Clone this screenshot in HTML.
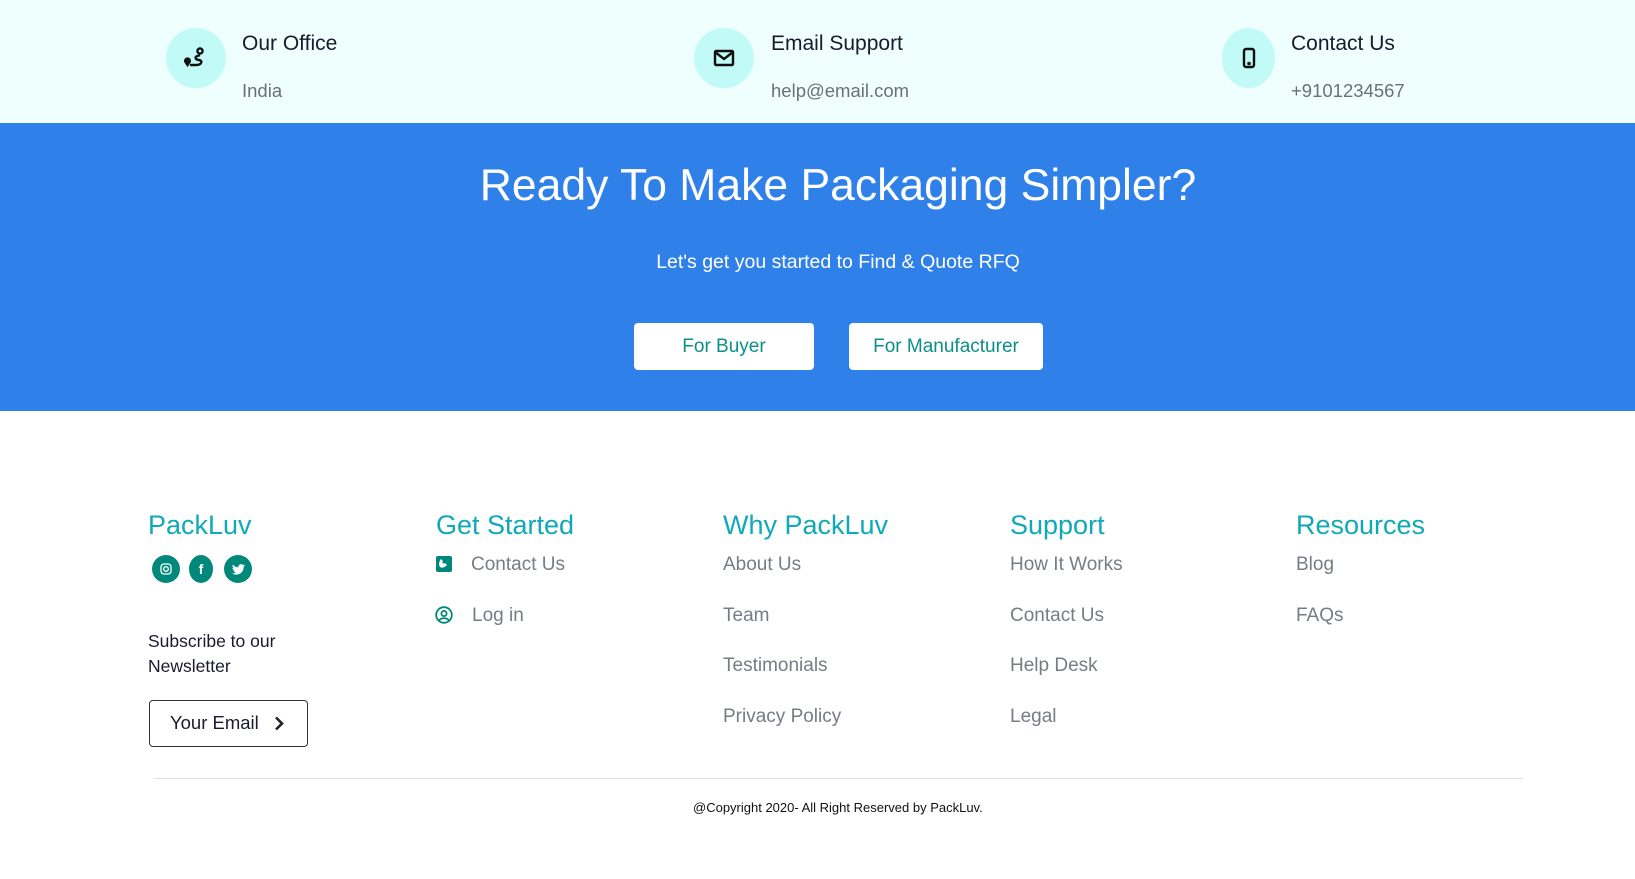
<!DOCTYPE html>
<html><head><meta charset="utf-8"><style>
*{margin:0;padding:0;box-sizing:border-box}
body{width:1635px;height:879px;background:#fff;font-family:"Liberation Sans",sans-serif;position:relative;overflow:hidden}
.abs{position:absolute}
.top{left:0;top:0;width:1635px;height:123px;background:#effffe}
.circ{width:60px;height:60px;border-radius:50%;background:#c2faf7;display:flex;align-items:center;justify-content:center;top:28px}
.t1{font-size:21px;color:#1a1a2e;top:32px}
.t2{font-size:18.5px;color:#6b6f7a;top:80px}
.blue{left:0;top:123px;width:1635px;height:288px;background:#2f80e8}
.btn{background:#fff;border-radius:4px;color:#0b8f8a;font-size:19px;display:flex;align-items:center;justify-content:center;top:323px;height:47px}
.h{font-size:27px;color:#10a9b8;top:510px}
.l{font-size:19px;color:#777c84}
.soc{width:28px;height:28px;border-radius:50%;background:#00897b;top:555px;display:flex;align-items:center;justify-content:center}
</style></head><body>
<div class="abs top"></div>
<div class="abs circ" style="left:166px"><svg width="26" height="24" viewBox="0 0 26 24" fill="none" stroke="#111" stroke-width="2.4" stroke-linecap="round"><path d="M4.5 19l-2-3a2.3 2.3 0 1 1 4 0z" fill="#111"/><circle cx="17" cy="5" r="2.6"/><path d="M16 9.5c-5 1-4 4 0 4.5s3 5-3 5H8"/></svg></div>
<div class="abs t1" style="left:242px">Our Office</div>
<div class="abs t2" style="left:242px">India</div>
<div class="abs circ" style="left:694px"><svg width="22" height="18" viewBox="0 0 22 18" fill="none" stroke="#111" stroke-width="2.4"><rect x="2" y="2" width="18" height="14" rx="1"/><path d="M2 3l9 7 9-7"/></svg></div>
<div class="abs t1" style="left:771px">Email Support</div>
<div class="abs t2" style="left:771px">help@email.com</div>
<div class="abs circ" style="left:1222px;width:53px"><svg width="14" height="22" viewBox="0 0 14 22" fill="none" stroke="#111" stroke-width="2.4"><rect x="2" y="2" width="10" height="18" rx="2"/><circle cx="7" cy="16.5" r="0.6" fill="#111"/></svg></div>
<div class="abs t1" style="left:1291px">Contact Us</div>
<div class="abs t2" style="left:1291px">+9101234567</div>
<div class="abs blue"></div>
<div class="abs" style="left:0;width:1676px;top:161px;text-align:center;color:#fff;font-size:44.5px">Ready To Make Packaging Simpler?</div>
<div class="abs" style="left:0;width:1676px;top:251px;text-align:center;color:#fff;font-size:19.5px">Let's get you started to Find &amp; Quote RFQ</div>
<div class="abs btn" style="left:634px;width:180px">For Buyer</div>
<div class="abs btn" style="left:849px;width:194px">For Manufacturer</div>
<div class="abs h" style="left:148px">PackLuv</div>
<div class="abs h" style="left:436px">Get Started</div>
<div class="abs h" style="left:723px">Why PackLuv</div>
<div class="abs h" style="left:1010px">Support</div>
<div class="abs h" style="left:1296px">Resources</div>
<div class="abs soc" style="left:152px"><svg width="12" height="12" viewBox="0 0 12 12" fill="none" stroke="#fff" stroke-width="1.3"><rect x="1" y="1" width="10" height="10" rx="3"/><circle cx="6" cy="6" r="2.3"/></svg></div>
<div class="abs soc" style="left:189px;width:24px"><span style="color:#fff;font-weight:bold;font-size:14px">f</span></div>
<div class="abs soc" style="left:224px"><svg width="13" height="11" viewBox="0 0 24 20"><path fill="#fff" d="M24 2.4a10 10 0 0 1-2.8.8A5 5 0 0 0 23.3.5a10 10 0 0 1-3.1 1.2A4.9 4.9 0 0 0 11.8 6 14 14 0 0 1 1.7.9a4.9 4.9 0 0 0 1.5 6.6A4.9 4.9 0 0 1 1 6.9a4.9 4.9 0 0 0 3.9 4.8 5 5 0 0 1-2.2.1 4.9 4.9 0 0 0 4.6 3.4A9.9 9.9 0 0 1 0 17.3 14 14 0 0 0 7.5 19.5c9 0 14-7.5 14-14v-.6A10 10 0 0 0 24 2.4z"/></svg></div>
<div class="abs" style="left:148px;top:629px;font-size:17.5px;line-height:25px;color:#1a1a2e">Subscribe to our<br>Newsletter</div>
<div class="abs" style="left:149px;top:700px;width:159px;height:47px;border:1.5px solid #333;border-radius:4px;font-size:18.5px;color:#1a1a2e;padding:11px 0 0 20px">Your Email<svg style="position:absolute;left:124px;top:15px" width="10" height="15" viewBox="0 0 10 15" fill="none" stroke="#222" stroke-width="2.6"><path d="M2 1.5l6 6-6 6"/></svg></div>
<svg class="abs" style="left:436px;top:556px" width="16" height="16" viewBox="0 0 16 16"><rect width="16" height="16" rx="2" fill="#00897b"/><path d="M4 11c3 2 6-1 7-2l-2-2-1 1-2-2 1-1-2-2c-1 1-3 5-1 8z" fill="#fff"/></svg>
<div class="abs l" style="left:471px;top:554px">Contact Us</div>
<svg class="abs" style="left:435px;top:606px" width="18" height="18" viewBox="0 0 18 18" fill="none" stroke="#00897b" stroke-width="1.8"><circle cx="9" cy="9" r="7.8"/><circle cx="9" cy="7.5" r="2.6"/><path d="M4 14.5c2-3 8-3 10 0"/></svg>
<div class="abs l" style="left:472px;top:605px">Log in</div>
<div class="abs l" style="left:723px;top:554px">About Us</div>
<div class="abs l" style="left:723px;top:605px">Team</div>
<div class="abs l" style="left:723px;top:655px">Testimonials</div>
<div class="abs l" style="left:723px;top:706px">Privacy Policy</div>
<div class="abs l" style="left:1010px;top:554px">How It Works</div>
<div class="abs l" style="left:1010px;top:605px">Contact Us</div>
<div class="abs l" style="left:1010px;top:655px">Help Desk</div>
<div class="abs l" style="left:1010px;top:706px">Legal</div>
<div class="abs l" style="left:1296px;top:554px">Blog</div>
<div class="abs l" style="left:1296px;top:605px">FAQs</div>
<div class="abs" style="left:154px;top:778px;width:1369px;height:1px;background:#e2e2e2"></div>
<div class="abs" style="left:693px;top:800px;font-size:13px;color:#111">@Copyright 2020- All Right Reserved by PackLuv.</div>
</body></html>
